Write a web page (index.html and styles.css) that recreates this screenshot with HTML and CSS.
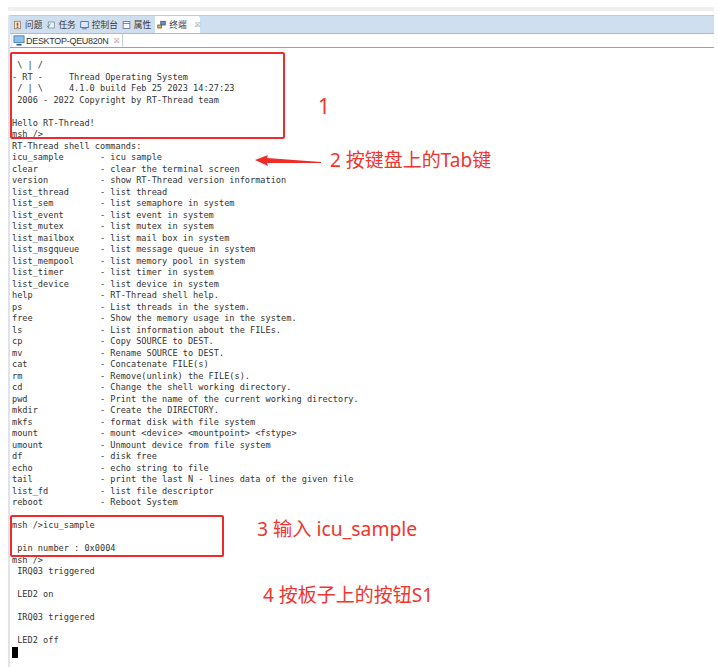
FILE: index.html
```html
<!DOCTYPE html>
<html lang="zh">
<head>
<meta charset="utf-8">
<title>Terminal</title>
<link rel="stylesheet" href="styles.css">
</head>
<body>
<div class="window">
  <div class="top-strip"></div>
  <div class="frame">
    <div class="views">
      <div class="view"><svg class="ico" viewBox="0 0 12 12"><rect x="2" y="1" width="8" height="10" fill="#f3e4c4" stroke="#8a7a5a"/><rect x="5" y="3" width="2" height="4" fill="#c33"/><rect x="5" y="8" width="2" height="2" fill="#c33"/></svg>问题</div>
      <div class="view"><svg class="ico" viewBox="0 0 12 12"><rect x="3" y="2" width="8" height="8" fill="#eef3f7" stroke="#6f8aa3"/><path d="M1 7l2 2 3-5" fill="none" stroke="#4b8a5a"/></svg>任务</div>
      <div class="view"><svg class="ico" viewBox="0 0 12 12"><rect x="1" y="1.500" width="10" height="8" fill="#dfe9f5" stroke="#2f5a94"/><path d="M3 11h6" stroke="#2f5a94"/></svg>控制台</div>
      <div class="view"><svg class="ico" viewBox="0 0 12 12"><rect x="1.500" y="1.500" width="9" height="9" fill="#f7f7f7" stroke="#55677c"/><path d="M1.500 4h9" stroke="#55677c"/></svg>属性</div>
      <div class="view active"><svg class="ico" viewBox="0 0 12 12"><rect x="5" y="1" width="6" height="5" fill="#6d8fb8" stroke="#33527a"/><rect x="1" y="6" width="5" height="4" fill="#e0b050" stroke="#6f5a2a"/></svg>终端<span class="close">⛝</span></div>
    </div>
    <div class="sessions">
      <div class="session"><svg class="ico mon" viewBox="0 0 14 13"><rect x="1" y="1" width="12" height="8" fill="#8fc0ea" stroke="#3f7cb8"/><path d="M4 11.500h6" stroke="#2f5a94" stroke-width="2"/></svg>DESKTOP-QEU820N<span class="close">⛝</span></div>
    </div>
    <pre class="term"> \ | /
- RT -     Thread Operating System
 / | \     4.1.0 build Feb 25 2023 14:27:23
 2006 - 2022 Copyright by RT-Thread team

Hello RT-Thread!
msh />
RT-Thread shell commands:
icu_sample       - icu sample
clear            - clear the terminal screen
version          - show RT-Thread version information
list_thread      - list thread
list_sem         - list semaphore in system
list_event       - list event in system
list_mutex       - list mutex in system
list_mailbox     - list mail box in system
list_msgqueue    - list message queue in system
list_mempool     - list memory pool in system
list_timer       - list timer in system
list_device      - list device in system
help             - RT-Thread shell help.
ps               - List threads in the system.
free             - Show the memory usage in the system.
ls               - List information about the FILEs.
cp               - Copy SOURCE to DEST.
mv               - Rename SOURCE to DEST.
cat              - Concatenate FILE(s)
rm               - Remove(unlink) the FILE(s).
cd               - Change the shell working directory.
pwd              - Print the name of the current working directory.
mkdir            - Create the DIRECTORY.
mkfs             - format disk with file system
mount            - mount &lt;device&gt; &lt;mountpoint&gt; &lt;fstype&gt;
umount           - Unmount device from file system
df               - disk free
echo             - echo string to file
tail             - print the last N - lines data of the given file
list_fd          - list file descriptor
reboot           - Reboot System

msh />icu_sample

 pin number : 0x0004
msh />
 IRQ03 triggered

 LED2 on

 IRQ03 triggered

 LED2 off
<span class="cursor"></span></pre>
  </div>
</div>
<div class="box box1"></div>
<div class="box box2"></div>
<div class="note n1">1</div>
<div class="note n2">2 按键盘上的Tab键</div>
<div class="note n3">3 输入 icu_sample</div>
<div class="note n4">4 按板子上的按钮S1</div>
<svg class="arrow" viewBox="0 0 70 12"><path d="M0 5 L13 0 L12 3 L66 7 L66 8 L12 8 L13 11 Z" fill="#f02c28"/></svg>
</body>
</html>
```
FILE: styles.css
```css
* { box-sizing: border-box; }
html, body { margin: 0; padding: 0; background: #fff; }
body { position: relative; width: 717px; height: 667px; overflow: hidden; font-family: "Noto Sans", "Noto Sans CJK SC", sans-serif; }
.window { margin: 0 3px 0 8px; padding-top: 7px; }
.top-strip { height: 4px; background: #efefef; margin-bottom: 4px; }
.frame { border-left: 2px solid #e0e2ee; }
.views { display: flex; align-items: stretch; height: 19px; background: #d0dfef; padding-left: 1px; font-size: 8.700px; color: #3a3a3a; border-top: 1px solid #c4ccd6; border-bottom: 1px solid #b9b9b9; }
.view { display: flex; align-items: center; gap: 3px; padding: 0 2px; font-family: "Noto Sans CJK SC", sans-serif; white-space: nowrap; }
.view.active { background: #fff; padding: 0 3px 0 2px; margin-left: 2px; border-radius: 0 3px 0 0; width: 45px; }
.ico { width: 9px; height: 10px; flex: none; }
.close { font-size: 7px; color: #999; margin-left: 5px; font-family: "DejaVu Sans", sans-serif; }
.sessions { height: 14px; padding-left: 1px; border-bottom: 1px solid #a0a0a0; display: flex; background: #fff; }
.session { display: flex; align-items: center; gap: 1px; padding: 0 3px 0 1px; font-size: 9px; letter-spacing: -0.300px; font-family: "Liberation Sans", sans-serif; color: #333; border-right: 1px solid #c8d0da; border-left: 1px solid #e2e6ec; }
.mon { width: 12px; height: 11px; }
.term { margin: 0; padding: 12px 0 0 2px; font-family: "DejaVu Sans Mono", monospace; font-size: 8.600px; line-height: 11.500px; color: #333; height: 620px; overflow: hidden; }
.cursor { display: inline-block; width: 6px; height: 11px; background: #000; vertical-align: top; }
.box { position: absolute; border: 2px solid #ee2a2a; border-radius: 2px; }
.box1 { left: 10px; top: 52px; width: 275px; height: 87px; }
.box2 { left: 10px; top: 515px; width: 214px; height: 42px; }
.note { position: absolute; color: #f0352e; white-space: nowrap; font-size: 19px; line-height: 24px; }
.n1 { left: 318px; top: 94px; font-size: 21px; }
.n2 { left: 330px; top: 148px; }
.n3 { left: 257px; top: 517px; font-size: 19.300px; }
.n4 { left: 263px; top: 583px; }
.arrow { position: absolute; left: 255px; top: 155px; width: 70px; height: 12px; }
```
